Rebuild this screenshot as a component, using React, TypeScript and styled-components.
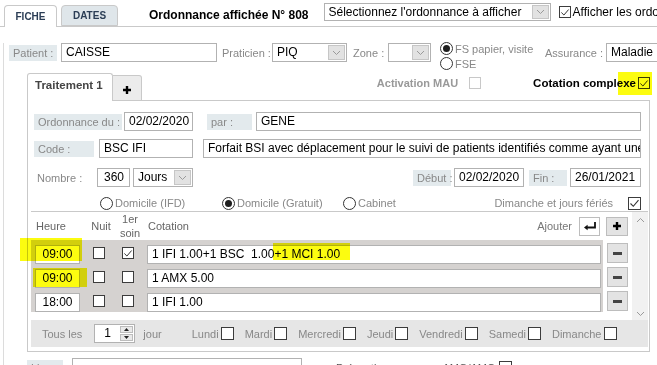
import React from "react"
import styled, { createGlobalStyle } from "styled-components"

// Colours
const line = "#c9c9c9"
const fieldBorder = "#b2b2b2"
const labelBg = "#e3eaed"
const labelText = "#888"
const rowGray = "#d5d2d0"

const GlobalStyle = createGlobalStyle`
  html, body {
    margin: 0;
    padding: 0;
    background: #fff;
  }
  body {
    width: 657px;
    height: 365px;
    overflow: hidden;
    font-family: "Liberation Sans", Arial, sans-serif;
    font-size: 12px;
    color: #000;
  }
  * {
    box-sizing: border-box;
  }
`

// Layout
const Page = styled.div`
  position: relative;
  width: 657px;
  height: 365px;
  overflow: hidden;
`

const TopBar = styled.div`
  display: flex;
  align-items: flex-end;
  height: 27px;
  padding-left: 4px;
  border-bottom: 1px solid ${line};
`

const Tab = styled.div<{ $active?: boolean; $w: number }>`
  flex: 0 0 auto;
  width: ${(p) => p.$w}px;
  height: ${(p) => (p.$active ? 22 : 21)}px;
  margin-right: 4px;
  margin-bottom: ${(p) => (p.$active ? -1 : 0)}px;
  border: 1px solid ${line};
  border-bottom: ${(p) => (p.$active ? "none" : `1px solid ${line}`)};
  border-radius: 4px 4px 0 0;
  background: ${(p) => (p.$active ? "#fff" : "#dfe6ea")};
  display: flex;
  align-items: center;
  justify-content: center;
  font-size: 10px;
  font-weight: bold;
  color: #2b3d55;
`

const Title = styled.div`
  flex: 0 0 auto;
  margin-left: 27px;
  margin-bottom: 4px;
  font-size: 12px;
  font-weight: bold;
  white-space: nowrap;
`

const TopRight = styled.div`
  flex: 0 0 auto;
  align-self: flex-start;
  margin-top: 3px;
  margin-left: 15px;
  display: flex;
  align-items: center;
  white-space: nowrap;
`

const Fiche = styled.div`
  margin-left: 3px;
  border-left: 1px solid #dcdcdc;
  height: 340px;
`

const Row = styled.div<{ $mt?: number; $pl?: number; $h?: number }>`
  display: flex;
  align-items: center;
  height: ${(p) => p.$h ?? 19}px;
  margin-top: ${(p) => p.$mt ?? 0}px;
  padding-left: ${(p) => p.$pl ?? 0}px;
`

const Label = styled.div<{ $w: number; $ml?: number }>`
  flex: 0 0 auto;
  width: ${(p) => p.$w}px;
  height: 16px;
  margin-left: ${(p) => p.$ml ?? 0}px;
  padding-left: 4px;
  background: ${labelBg};
  color: ${labelText};
  font-size: 11px;
  line-height: 16px;
  white-space: nowrap;
`

const Plain = styled.div<{ $w?: number; $ml?: number; $pl?: number; $color?: string; $size?: number }>`
  flex: 0 0 auto;
  width: ${(p) => (p.$w ? `${p.$w}px` : "auto")};
  margin-left: ${(p) => p.$ml ?? 0}px;
  padding-left: ${(p) => p.$pl ?? 0}px;
  color: ${(p) => p.$color ?? labelText};
  font-size: ${(p) => p.$size ?? 11}px;
  white-space: nowrap;
`

const Field = styled.div<{ $w?: number; $ml?: number; $pl?: number; $center?: boolean }>`
  flex: ${(p) => (p.$w ? "0 0 auto" : "1 1 0")};
  width: ${(p) => (p.$w ? `${p.$w}px` : "auto")};
  height: 19px;
  margin-left: ${(p) => p.$ml ?? 0}px;
  padding: 0 0 0 ${(p) => p.$pl ?? 4}px;
  border: 1px solid ${fieldBorder};
  background: #fff;
  font-size: 12px;
  line-height: 17px;
  text-align: ${(p) => (p.$center ? "center" : "left")};
  white-space: pre;
  overflow: hidden;
`

const Select = styled.div<{ $w: number; $ml?: number; $h?: number }>`
  flex: 0 0 auto;
  display: flex;
  width: ${(p) => p.$w}px;
  height: ${(p) => p.$h ?? 19}px;
  margin-left: ${(p) => p.$ml ?? 0}px;
  border: 1px solid ${fieldBorder};
  background: #fff;
`

const SelectText = styled.div`
  flex: 1;
  padding-left: 4px;
  font-size: 12px;
  line-height: 16px;
  white-space: nowrap;
  overflow: hidden;
`

const SelectButton = styled.div`
  width: 17px;
  margin: 1px;
  background: #e2e2e2;
  border: 1px solid #c6c6c6;
  display: flex;
  align-items: center;
  justify-content: center;
`

const Box = styled.span<{ $muted?: boolean; $size?: number; $ml?: number; $mt?: number }>`
  flex: 0 0 auto;
  display: inline-flex;
  align-items: center;
  justify-content: center;
  width: ${(p) => p.$size ?? 13}px;
  height: ${(p) => p.$size ?? 13}px;
  margin-left: ${(p) => p.$ml ?? 0}px;
  margin-top: ${(p) => p.$mt ?? 0}px;
  border: 1px solid ${(p) => (p.$muted ? "#c8c8c8" : "#3c3c3c")};
  background: #fff;
`

const RadioDot = styled.span<{ $on?: boolean }>`
  flex: 0 0 auto;
  position: relative;
  width: 13px;
  height: 13px;
  border-radius: 50%;
  border: 1px solid #333;
  background: #fff;

  &::after {
    content: "";
    display: ${(p) => (p.$on ? "block" : "none")};
    position: absolute;
    left: 2px;
    top: 2px;
    width: 7px;
    height: 7px;
    border-radius: 50%;
    background: #1e1e1e;
  }
`

const RadioStack = styled.div`
  flex: 0 0 auto;
  align-self: flex-start;
  margin-top: -2px;
  margin-left: 9px;
  width: 105px;
`

const RadioLine = styled.div<{ $w?: number; $ml?: number }>`
  display: flex;
  align-items: center;
  gap: 2px;
  height: 15px;
  width: ${(p) => (p.$w ? `${p.$w}px` : "auto")};
  margin-left: ${(p) => p.$ml ?? 0}px;
  flex: 0 0 auto;
  color: ${labelText};
  font-size: 11px;
  white-space: nowrap;
`

// Traitement panel
const TreatBox = styled.div`
  margin-top: 11px;
  margin-left: 23px;
  width: 623px;
`

const TabStrip = styled.div`
  display: flex;
  align-items: flex-end;
  height: 28px;
`

const TreatTab = styled.div`
  flex: 0 0 auto;
  width: 86px;
  height: 28px;
  border: 1px solid ${line};
  border-bottom: none;
  border-radius: 3px 3px 0 0;
  background: #fff;
  padding: 5px 0 0 7px;
  font-size: 11.5px;
  font-weight: bold;
  color: #444;
`

const AddTab = styled.div`
  flex: 0 0 auto;
  width: 29px;
  height: 26px;
  border: 1px solid ${line};
  border-left: none;
  border-radius: 0 3px 0 0;
  background: #ececec;
  display: flex;
  align-items: center;
  justify-content: center;
  padding-top: 3px;
`

const StripRest = styled.div`
  flex: 1;
  height: 100%;
  border-bottom: 1px solid ${line};
  display: flex;
  justify-content: flex-end;
  align-items: flex-start;
  padding-top: 4px;
`

const StripItem = styled.div<{ $ml?: number; $color: string; $size: number }>`
  display: flex;
  align-items: center;
  margin-left: ${(p) => p.$ml ?? 0}px;
  color: ${(p) => p.$color};
  font-size: ${(p) => p.$size}px;
  font-weight: bold;
  white-space: nowrap;
`

const BoxBody = styled.div`
  border: 1px solid ${line};
  border-top: none;
  padding: 11px 8px 4px 6px;
`

const Spacer = styled.div`
  flex: 1;
`

const SubPanel = styled.div`
  margin: 1px -7px 0 -3px;
  border-top: 1px solid ${line};
`

const TableArea = styled.div`
  display: flex;
  height: 108px;
`

const Table = styled.div`
  flex: 1;
`

const HeaderRow = styled.div`
  display: flex;
  align-items: center;
  height: 28px;
  color: #666;
  font-size: 11px;
`

const HCell = styled.div<{ $w?: number; $pl?: number; $center?: boolean; $color?: string }>`
  flex: 0 0 auto;
  width: ${(p) => (p.$w ? `${p.$w}px` : "auto")};
  padding-left: ${(p) => p.$pl ?? 0}px;
  text-align: ${(p) => (p.$center ? "center" : "left")};
  color: ${(p) => p.$color ?? "inherit"};
  line-height: 14px;
`

const ToolButton = styled.div<{ $ml: number; $gray?: boolean; $w?: number; $h?: number; $mt?: number; $mr?: number }>`
  flex: 0 0 auto;
  width: ${(p) => p.$w ?? 21}px;
  height: ${(p) => p.$h ?? 19}px;
  margin: ${(p) => p.$mt ?? 0}px ${(p) => p.$mr ?? 0}px 0 ${(p) => p.$ml}px;
  border: 1px solid #bdbdbd;
  background: ${(p) => (p.$gray ? "#e3e3e3" : "#fff")};
  display: flex;
  align-items: center;
  justify-content: center;
`

const DoseRow = styled.div`
  display: flex;
  height: 24px;
`

const DoseCells = styled.div`
  flex: 1;
  display: flex;
  align-items: flex-start;
  background: ${rowGray};
  padding: 5px 2px 0 4px;
`

const MinusBar = styled.span`
  width: 9px;
  height: 3px;
  background: #444;
`

const Scroller = styled.div`
  width: 16px;
  background: #f1f1f1;
  display: flex;
  flex-direction: column;
  justify-content: space-between;
  align-items: center;
  padding: 5px 0 3px;
`

const DaysBand = styled.div`
  display: flex;
  align-items: center;
  height: 27px;
  background: #e6e6e6;
  padding-left: 11px;
  color: ${labelText};
  font-size: 11px;
  white-space: nowrap;
`

const Spinner = styled.div`
  display: flex;
  width: 41px;
  height: 19px;
  margin-left: 12px;
  border: 1px solid ${fieldBorder};
  background: #fff;
  color: #000;
  font-size: 12px;
`

const SpinValue = styled.div`
  flex: 1;
  padding-left: 9px;
  line-height: 16px;
`

const SpinButtons = styled.div`
  width: 15px;
  display: flex;
  flex-direction: column;
  gap: 1px;
  padding: 1px;
`

const SpinButton = styled.div`
  flex: 1;
  background: #e9e9e9;
  border: 1px solid #bcbcbc;
  display: flex;
  align-items: center;
  justify-content: center;
`

const Day = styled.div<{ $ml: number }>`
  display: flex;
  align-items: center;
  gap: 2px;
  margin-left: ${(p) => p.$ml}px;
`

const Marker = styled.div<{ $x: number; $y: number; $w: number; $h: number }>`
  position: absolute;
  left: ${(p) => p.$x}px;
  top: ${(p) => p.$y}px;
  width: ${(p) => p.$w}px;
  height: ${(p) => p.$h}px;
  background: #fcfc10;
  mix-blend-mode: multiply;
  pointer-events: none;
`

// Icons
const Chevron = ({ up }: { up?: boolean }) => (
  <svg width="9" height="6" viewBox="0 0 9 6">
    <polyline
      points={up ? "1,5 4.5,1.5 8,5" : "1,1 4.5,4.5 8,1"}
      fill="none"
      stroke="#9a9a9a"
      strokeWidth="1"
    />
  </svg>
)

const Check = () => (
  <svg width="11" height="11" viewBox="0 0 11 11">
    <polyline points="1.5,5.5 4.3,8.3 9.5,2.2" fill="none" stroke="#333" strokeWidth="1.1" />
  </svg>
)

const Plus = () => (
  <svg width="10" height="10" viewBox="0 0 10 10">
    <path d="M5 1 V9 M1 5 H9" stroke="#000" strokeWidth="2.4" />
  </svg>
)

const EnterIcon = () => (
  <svg width="14" height="10" viewBox="0 0 14 10">
    <path d="M12 1 V6.5 H4" stroke="#111" strokeWidth="1.8" fill="none" />
    <path d="M1 6.5 L4.6 3.8 V9.2 Z" fill="#111" />
  </svg>
)

const Tri = ({ up }: { up?: boolean }) => (
  <svg width="5" height="3" viewBox="0 0 5 3">
    <path d={up ? "M0 3 L2.5 0 L5 3 Z" : "M0 0 L5 0 L2.5 3 Z"} fill="#222" />
  </svg>
)

const Checkbox = (props: { on?: boolean; muted?: boolean; size?: number; ml?: number; mt?: number }) => (
  <Box $muted={props.muted} $size={props.size} $ml={props.ml} $mt={props.mt}>
    {props.on && <Check />}
  </Box>
)

const Dropdown = (props: { w: number; ml?: number; h?: number; value?: string }) => (
  <Select $w={props.w} $ml={props.ml} $h={props.h}>
    <SelectText>{props.value}</SelectText>
    <SelectButton>
      <Chevron />
    </SelectButton>
  </Select>
)

// Data
const doses = [
  { time: "09:00", night: false, first: true, cotation: "1 IFI 1.00+1 BSC  1.00+1 MCI 1.00" },
  { time: "09:00", night: false, first: false, cotation: "1 AMX 5.00" },
  { time: "18:00", night: false, first: false, cotation: "1 IFI 1.00" },
]

const days = ["Lundi", "Mardi", "Mercredi", "Jeudi", "Vendredi", "Samedi", "Dimanche"]

const App = () => {
  return (
    <Page>
      <GlobalStyle />
      <TopBar>
        <Tab $active $w={53}>FICHE</Tab>
        <Tab $w={57}>DATES</Tab>
        <Title>Ordonnance affichée N° 808</Title>
        <TopRight>
          <Dropdown w={227} h={18} value="Sélectionnez l'ordonnance à afficher" />
          <Checkbox on size={12} ml={8} />
          <Plain $ml={2} $color="#000" $size={12}>
            Afficher les ordonnances
          </Plain>
        </TopRight>
      </TopBar>

      <Fiche>
        <Row $mt={16} $pl={5}>
          <Label $w={48}>Patient :</Label>
          <Field $w={156} $ml={4}>CAISSE</Field>
          <Plain $w={50} $ml={5}>Praticien :</Plain>
          <Dropdown w={75} value="PIQ" />
          <Plain $w={35} $ml={6}>Zone :</Plain>
          <Dropdown w={43} />
          <RadioStack>
            <RadioLine>
              <RadioDot $on />
              FS papier, visite
            </RadioLine>
            <RadioLine>
              <RadioDot />
              FSE
            </RadioLine>
          </RadioStack>
          <Plain $w={61}>Assurance :</Plain>
          <Field $w={80}>Maladie</Field>
        </Row>

        <TreatBox>
          <TabStrip>
            <TreatTab>Traitement 1</TreatTab>
            <AddTab>
              <Plus />
            </AddTab>
            <StripRest>
              <StripItem $color="#999" $size={11}>
                Activation MAU
                <Checkbox muted size={12} ml={11} />
              </StripItem>
              <StripItem $color="#000" $size={11.5} $ml={52}>
                Cotation complexe
                <Checkbox on size={12} ml={2} />
              </StripItem>
            </StripRest>
          </TabStrip>

          <BoxBody>
            <Row>
              <Label $w={88}>Ordonnance du :</Label>
              <Field $w={69} $ml={2}>02/02/2020</Field>
              <Label $w={45} $ml={14}>par :</Label>
              <Field $ml={4}>GENE</Field>
            </Row>
            <Row $mt={8}>
              <Label $w={60}>Code :</Label>
              <Field $w={94} $ml={5}>BSC IFI</Field>
              <Field $ml={10}>
                Forfait BSI avec déplacement pour le suivi de patients identifiés comme ayant une
              </Field>
            </Row>
            <Row $mt={10}>
              <Plain $w={63} $pl={3}>Nombre :</Plain>
              <Field $w={33} $pl={6}>360</Field>
              <Dropdown w={60} ml={3} value="Jours" />
              <Spacer />
              <Label $w={38}>Début :</Label>
              <Field $w={70} $ml={3}>02/02/2020</Field>
              <Label $w={38} $ml={5}>Fin :</Label>
              <Field $w={71} $ml={3}>26/01/2021</Field>
            </Row>
            <Row $mt={9} $h={14}>
              <RadioLine $w={122} $ml={66}>
                <RadioDot />
                Domicile (IFD)
              </RadioLine>
              <RadioLine $w={121}>
                <RadioDot $on />
                Domicile (Gratuit)
              </RadioLine>
              <RadioLine>
                <RadioDot />
                Cabinet
              </RadioLine>
              <Spacer />
              <Plain>Dimanche et jours fériés</Plain>
              <Checkbox on ml={15} />
            </Row>

            <SubPanel>
              <TableArea>
                <Table>
                  <HeaderRow>
                    <HCell $w={55} $pl={5}>Heure</HCell>
                    <HCell $w={30} $center>Nuit</HCell>
                    <HCell $w={28} $center>
                      1er
                      <br />
                      soin
                    </HCell>
                    <HCell $pl={4}>Cotation</HCell>
                    <Spacer />
                    <HCell $color="#777">Ajouter</HCell>
                    <ToolButton $ml={7}>
                      <EnterIcon />
                    </ToolButton>
                    <ToolButton $ml={6} $mr={4} $gray $w={22}>
                      <Plus />
                    </ToolButton>
                  </HeaderRow>
                  {doses.map((dose, i) => (
                    <DoseRow key={i}>
                      <DoseCells>
                        <Field $w={45} $center $pl={0}>{dose.time}</Field>
                        <Checkbox on={dose.night} size={12} ml={13} mt={2} />
                        <Checkbox on={dose.first} size={12} ml={17} mt={2} />
                        <Field $ml={13}>{dose.cotation}</Field>
                      </DoseCells>
                      <ToolButton $ml={4} $mr={4} $mt={3} $gray $w={21} $h={20}>
                        <MinusBar />
                      </ToolButton>
                    </DoseRow>
                  ))}
                </Table>
                <Scroller>
                  <Chevron up />
                  <Chevron />
                </Scroller>
              </TableArea>
              <DaysBand>
                Tous les
                <Spinner>
                  <SpinValue>1</SpinValue>
                  <SpinButtons>
                    <SpinButton>
                      <Tri up />
                    </SpinButton>
                    <SpinButton>
                      <Tri />
                    </SpinButton>
                  </SpinButtons>
                </Spinner>
                <Plain $ml={8}>jour</Plain>
                {days.map((d, i) => (
                  <Day key={d} $ml={i === 0 ? 30 : 11}>
                    {d}
                    <Checkbox />
                  </Day>
                ))}
              </DaysBand>
            </SubPanel>
          </BoxBody>
        </TreatBox>

        <Row $mt={6} $pl={23}>
          <Label $w={36}>Lieu :</Label>
          <Field $w={230} $ml={9} />
          <Plain $ml={34} $color="#555">Prévention commune AMO/AMC</Plain>
          <Checkbox ml={4} />
        </Row>
      </Fiche>

      <Marker $x={618} $y={72} $w={34} $h={23} />
      <Marker $x={20} $y={238} $w={62} $h={23} />
      <Marker $x={33} $y={268} $w={54} $h={19} />
      <Marker $x={273} $y={243} $w={77} $h={17} />
    </Page>
  )
}

export default App
